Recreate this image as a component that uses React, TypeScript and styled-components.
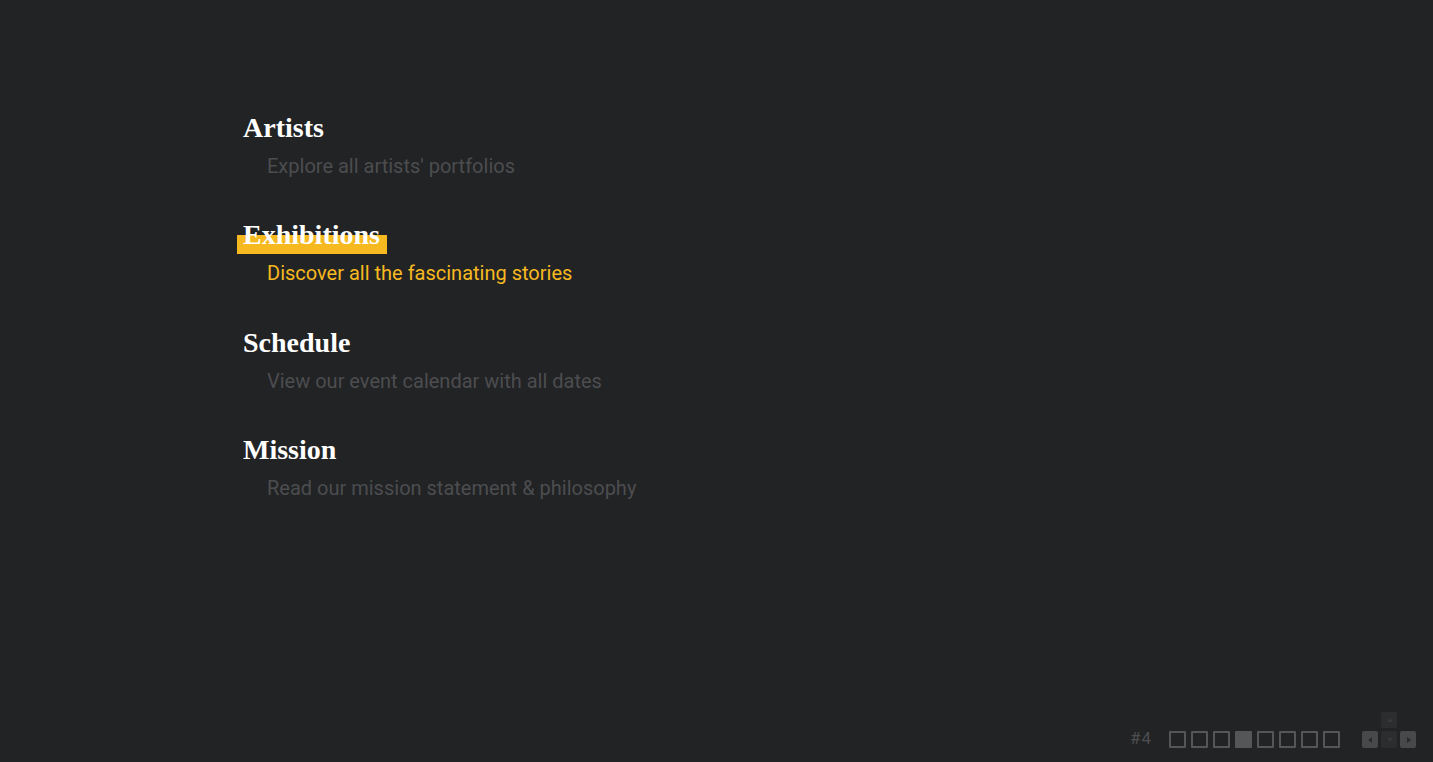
import React from "react";
import styled, { createGlobalStyle } from "styled-components";

const GlobalStyle = createGlobalStyle`
  html, body { margin: 0; padding: 0; background: #222325; }
  body { font-family: Roboto, "Noto Sans", sans-serif; }
  * { box-sizing: border-box; }
`;

const Page = styled.div`
  height: 100vh;
  display: flex;
  flex-direction: column;
  background: #222325;
  overflow: hidden;
`;

const Menu = styled.nav`
  flex: 1;
  display: flex;
  flex-direction: column;
  gap: 41px;
  padding: 112px 0 0 243px;
`;

const Item = styled.a`
  display: flex;
  flex-direction: column;
  gap: 11px;
  text-decoration: none;
  align-items: flex-start;
`;

const Title = styled.span<{ $active?: boolean }>`
  position: relative;
  font-family: "Liberation Serif", "Times New Roman", serif;
  font-weight: 700;
  font-size: 28px;
  line-height: 32px;
  color: #ffffff;
  z-index: 0;
  &::before {
    content: "";
    display: ${(p) => (p.$active ? "block" : "none")};
    position: absolute;
    left: -6px;
    right: -7px;
    top: 16px;
    height: 19px;
    background: #f6b91f;
    z-index: -1;
  }
`;

const Sub = styled.span<{ $active?: boolean }>`
  font-family: Roboto, "Noto Sans", sans-serif;
  font-size: 20px;
  line-height: 23.4px;
  padding-left: 24px;
  color: ${(p) => (p.$active ? "#f6b91f" : "#4c4d4f")};
`;

const Footer = styled.footer`
  display: flex;
  justify-content: flex-end;
  align-items: flex-end;
  padding: 0 17px 14px 0;
`;

const Counter = styled.span`
  font-family: Roboto, sans-serif;
  font-size: 17px;
  line-height: 17px;
  letter-spacing: 1px;
  color: #4c4d4f;
  margin-right: 17px;
  padding-bottom: 1px;
`;

const Dots = styled.div`
  display: flex;
  gap: 5px;
  margin-right: 22px;
`;

const Dot = styled.span<{ $active?: boolean }>`
  width: 17px;
  height: 17px;
  border: 2px solid #555658;
  border-radius: 1px;
  background: ${(p) => (p.$active ? "#555658" : "transparent")};
`;

const Pad = styled.div`
  display: grid;
  grid-template-columns: repeat(3, 16px);
  grid-template-rows: 16px 17px;
  gap: 3px;
`;

const Arrow = styled.span<{ $enabled?: boolean; $col: number; $row: number }>`
  grid-column: ${(p) => p.$col};
  grid-row: ${(p) => p.$row};
  border-radius: 2px;
  background: ${(p) => (p.$enabled ? "#48494b" : "#2c2d2f")};
  display: flex;
  align-items: center;
  justify-content: center;
  color: ${(p) => (p.$enabled ? "#2a2b2d" : "#38393b")};
`;

const Tri = ({ dir }: { dir: "up" | "down" | "left" | "right" }) => {
  const pts = {
    up: "4,1 7,5 1,5",
    down: "1,2 7,2 4,6",
    left: "5,1 5,7 1,4",
    right: "2,1 2,7 6,4",
  }[dir];
  return (
    <svg width="7" height="7" viewBox="0 0 7 7">
      <polygon points={pts} fill="currentColor" />
    </svg>
  );
};

const items = [
  { title: "Artists", sub: "Explore all artists' portfolios" },
  { title: "Exhibitions", sub: "Discover all the fascinating stories", active: true },
  { title: "Schedule", sub: "View our event calendar with all dates" },
  { title: "Mission", sub: "Read our mission statement & philosophy" },
];

export default function App() {
  return (
    <Page>
      <GlobalStyle />
      <Menu>
        {items.map((it) => (
          <Item key={it.title} href="#">
            <Title $active={it.active}>{it.title}</Title>
            <Sub $active={it.active}>{it.sub}</Sub>
          </Item>
        ))}
      </Menu>
      <Footer>
        <Counter>#4</Counter>
        <Dots>
          {Array.from({ length: 8 }).map((_, i) => (
            <Dot key={i} $active={i === 3} />
          ))}
        </Dots>
        <Pad>
          <Arrow $col={2} $row={1}><Tri dir="up" /></Arrow>
          <Arrow $col={1} $row={2} $enabled><Tri dir="left" /></Arrow>
          <Arrow $col={2} $row={2}><Tri dir="down" /></Arrow>
          <Arrow $col={3} $row={2} $enabled><Tri dir="right" /></Arrow>
        </Pad>
      </Footer>
    </Page>
  );
}
